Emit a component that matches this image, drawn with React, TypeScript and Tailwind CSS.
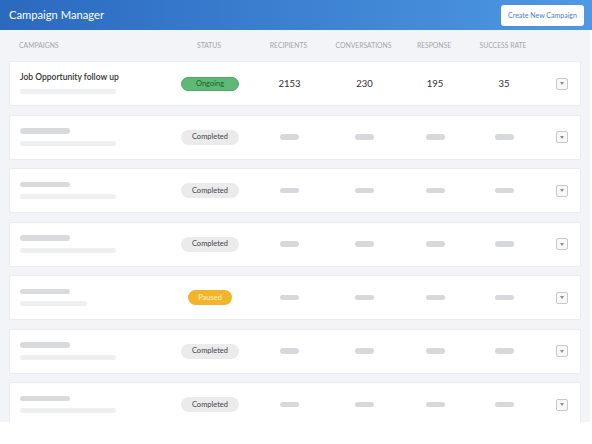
import React from "react"

type Status = "ongoing" | "completed" | "paused"

interface Campaign {
  name?: string
  status: Status
  recipients?: number
  conversations?: number
  response?: number
  successRate?: number
  shortSub?: boolean
}

const campaigns: Campaign[] = [
  { name: "Job Opportunity follow up", status: "ongoing", recipients: 2153, conversations: 230, response: 195, successRate: 35 },
  { status: "completed" },
  { status: "completed" },
  { status: "completed" },
  { status: "paused", shortSub: true },
  { status: "completed" },
  { status: "completed" },
]

const cols = "grid grid-cols-[150px_80px_79px_71px_70px_68px_45px] items-center"

const StatusPill = ({ status }: { status: Status }) => {
  if (status === "ongoing")
    return (
      <span className="w-[58px] h-[14px] rounded-full bg-[#5db975] border border-[#4fa866] text-[#24602f] text-[7.5px] flex items-center justify-center">
        Ongoing
      </span>
    )
  if (status === "paused")
    return (
      <span className="w-[44px] h-[15px] rounded-full bg-[#f3b42a] text-[#fdf0cf] text-[7.5px] flex items-center justify-center">
        Paused
      </span>
    )
  return (
    <span className="w-[58px] h-[15px] rounded-full bg-[#ebebec] text-[#444446] text-[7.5px] flex items-center justify-center">
      Completed
    </span>
  )
}

const Cell = ({ value }: { value?: number }) => (
  <div className="flex justify-center">
    {value !== undefined ? (
      <span className="text-[9.5px] text-[#2e2e2e] translate-y-[1px]">{value}</span>
    ) : (
      <span className="w-[19px] h-[5.5px] rounded-full bg-[#d6d8db]" />
    )}
  </div>
)

const DropIcon = () => (
  <div className="ml-[18px] w-[12px] h-[12px] rounded-[2px] border border-[#c9c9cb] bg-[#f8f8f8] flex items-center justify-center">
    <svg width="4" height="3" viewBox="0 0 4 3">
      <path d="M0 0 L4 0 L2 3 Z" fill="#8d8d8f" />
    </svg>
  </div>
)

export default function App() {
  return (
    <div className="w-[592px] h-[444px] bg-white font-['Lato',sans-serif] overflow-hidden">
      {/* Header */}
      <div className="h-[30px] bg-gradient-to-r from-[#2b69bf] to-[#4e99e4] flex items-center justify-between pl-[9px] pr-[8px]">
        <h1 className="text-white text-[11.2px]">Campaign Manager</h1>
        <button className="w-[83px] h-[21px] bg-white rounded-[3px] text-[#4a80c8] text-[7px] flex items-center justify-center">
          Create New Campaign
        </button>
      </div>

      {/* Body */}
      <div className="w-[590px] h-[392px] bg-[#f3f4f7] overflow-hidden px-[9px]">
        <div className={`${cols} h-[31px] pl-[10px] text-[6.8px] text-[#a3a5aa] uppercase`}>
          <span>Campaigns</span>
          <span className="text-center">Status</span>
          <span className="text-center">Recipients</span>
          <span className="text-center">Conversations</span>
          <span className="text-center">Response</span>
          <span className="text-center">Success Rate</span>
          <span />
        </div>

        <div className="flex flex-col gap-[8.5px]">
          {campaigns.map((c, i) => (
            <div key={i} className={`${cols} h-[45px] shrink-0 bg-white border border-[#eaecef] rounded-[2px] pl-[10px]`}>
              <div className="flex flex-col">
                {c.name ? (
                  <>
                    <span className="text-[8.5px] font-semibold text-[#333333] leading-none">{c.name}</span>
                    <span className="mt-[8px] w-[96px] h-[5px] rounded-full bg-[#eeeff0]" />
                  </>
                ) : (
                  <>
                    <span className="w-[50px] h-[5.5px] rounded-full bg-[#d9dadc]" />
                    <span className={`mt-[7px] ${c.shortSub ? "w-[67px]" : "w-[96px]"} h-[5px] rounded-full bg-[#eeeff0]`} />
                  </>
                )}
              </div>
              <div className="flex justify-center">
                <StatusPill status={c.status} />
              </div>
              <Cell value={c.recipients} />
              <Cell value={c.conversations} />
              <Cell value={c.response} />
              <Cell value={c.successRate} />
              <DropIcon />
            </div>
          ))}
        </div>
      </div>
    </div>
  )
}
